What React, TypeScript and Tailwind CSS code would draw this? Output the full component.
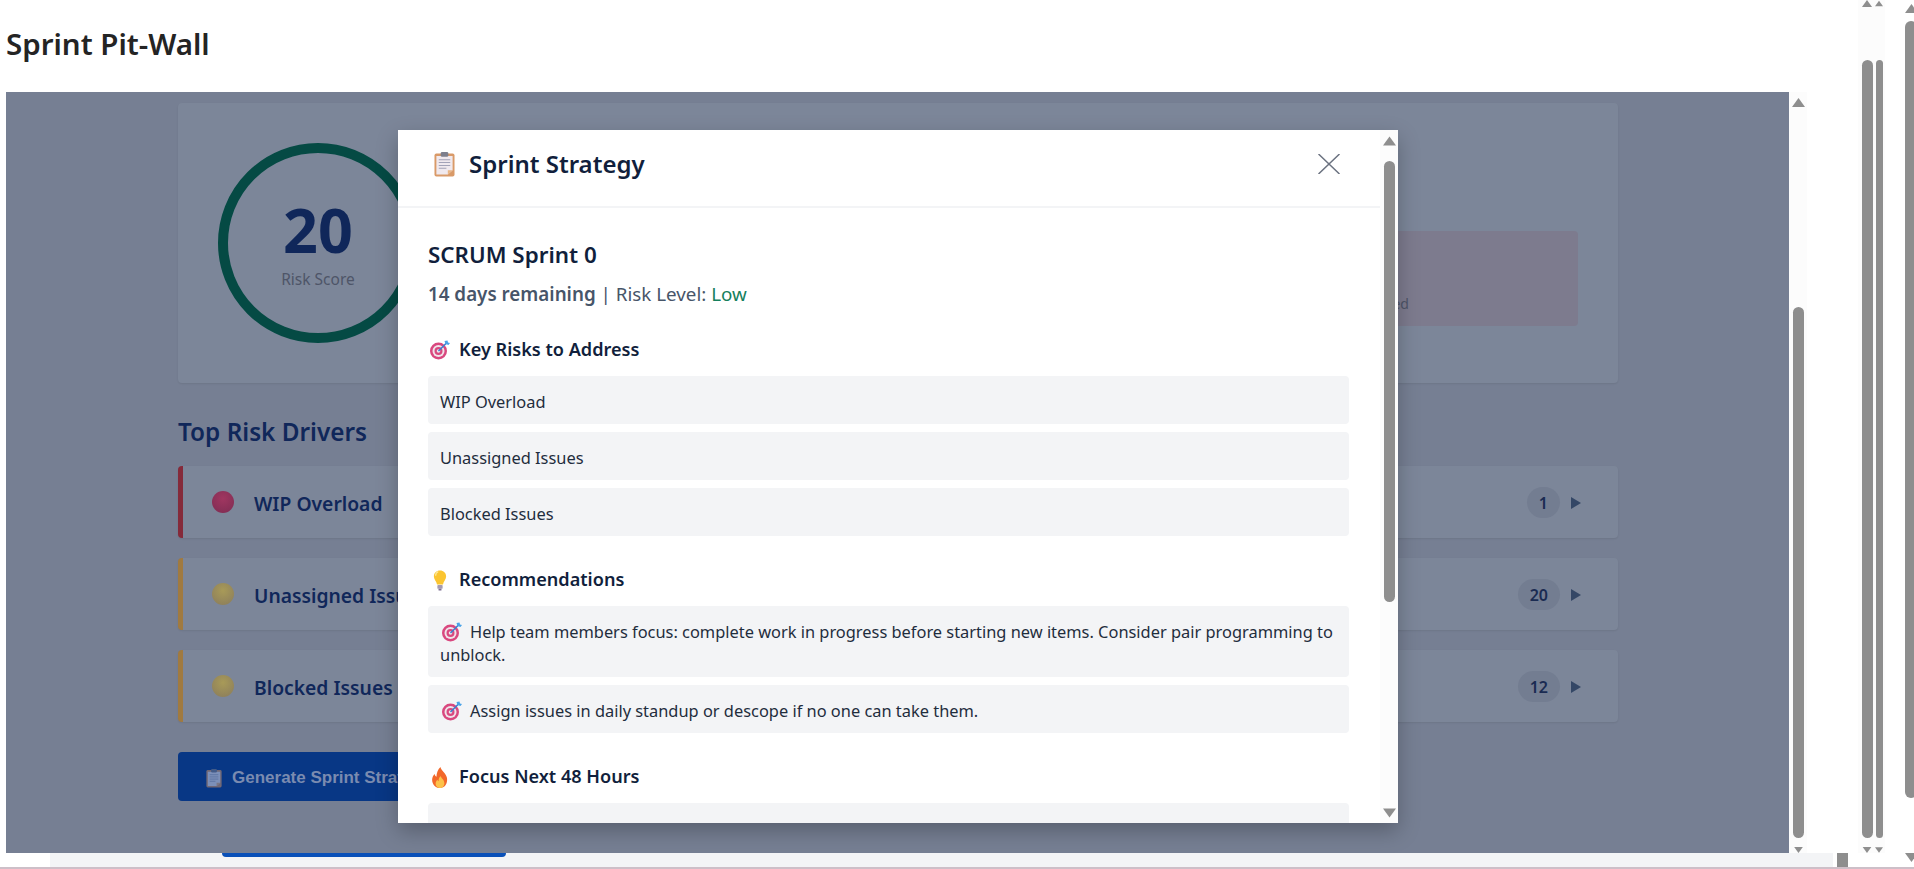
import React from "react";

const ClipboardIcon = ({ className }: { className?: string }) => (
  <svg viewBox="0 0 22 26" className={className}>
    <rect x="0.5" y="2" width="21" height="24" rx="2" fill="#d99a68" />
    <path d="M2.5 4.5h17v15l-5 4.5h-12z" fill="#f0e9ee" />
    <path d="M14.5 24l5-4.5h-5z" fill="#e9b585" />
    <rect x="7" y="0.5" width="8" height="5" rx="1.5" fill="#7d7f8c" />
    <path d="M5 8.5h12M5 11.5h12M5 14.5h12M5 17.5h8" stroke="#a3a3b8" strokeWidth="1.1" />
  </svg>
);

const TargetIcon = ({ className }: { className?: string }) => (
  <svg viewBox="0 0 20 20" className={className}>
    <circle cx="8.5" cy="11" r="8.5" fill="#d9487f" />
    <circle cx="8.5" cy="11" r="6" fill="#f0e4ea" />
    <circle cx="8.5" cy="11" r="4" fill="#d9487f" />
    <circle cx="8.5" cy="11" r="1.8" fill="#f0e4ea" />
    <path d="M8.5 11L17 2.5" stroke="#3b7fd0" strokeWidth="1.6" />
    <path d="M14.5 1l1 3 3 1 1.5-2-2-.5-.5-2z" fill="#4aa3e8" />
  </svg>
);

const BulbIcon = ({ className }: { className?: string }) => (
  <svg viewBox="0 0 16 24" className={className}>
    <path d="M8 0.5c4 0 7 3 7 6.8 0 3.4-3 5.4-3.6 9.2H4.6C4 12.700 1 10.700 1 7.300 1 3.500 4 .5 8 .5z" fill="#fbc531" />
    <path d="M6 1.800c-2 .7-3 2.600-3 4.700" stroke="#fde99a" strokeWidth="1.400" fill="none" />
    <rect x="5" y="17" width="6" height="4.500" rx="1" fill="#a59bb0" />
    <rect x="6.200" y="21.500" width="3.600" height="2" rx="1" fill="#7d6f92" />
  </svg>
);

const FireIcon = ({ className }: { className?: string }) => (
  <svg viewBox="0 0 18 24" className={className}>
    <path d="M9.500 0c.6 4 6.500 7 7.500 12.500C18 19 14 24 9 24S0 20 0 14.500c0-3 1.500-5 3-6.500.2 1.500.8 2.500 2 3C5 7 6.500 3 9.500 0z" fill="#f2682a" />
    <path d="M9.500 10c.5 2.500 4.500 4.500 4.500 8.500 0 3-2.200 5.500-5 5.500s-5-2.300-5-5c0-2 1-3.500 2-4.500.3 1 .8 1.500 1.500 1.700-.3-2.200.5-4.500 2-5.700z" fill="#fcc24a" />
  </svg>
);

// grey arrow-and-thumb scrollbar, the spacing classes are per bar
const Arrow = ({ down, className }: { down?: boolean; className?: string }) => (
  <svg viewBox="0 0 13 9" className={className}>
    <path d={down ? "M0 0h13L6.500 9z" : "M6.500 0L13 9H0z"} fill="#8e8e8e" />
  </svg>
);

const Thumb = ({ className }: { className?: string }) => (
  <div className={`rounded-full bg-[#8e8e8e] ${className}`} />
);

const drivers = [
  { name: "WIP Overload", count: "1", bar: "border-l-[#852a3a]", dot: "bg-[radial-gradient(circle_at_50%_35%,#a03660,#7d2c52)]" },
  { name: "Unassigned Issues", count: "20", bar: "border-l-[#a07a40]", dot: "bg-[radial-gradient(circle_at_50%_35%,#a89a58,#897b5c)]" },
  { name: "Blocked Issues", count: "12", bar: "border-l-[#a07a40]", dot: "bg-[radial-gradient(circle_at_50%_35%,#a89a58,#897b5c)]" },
];

const Item = ({ children }: { children: React.ReactNode }) => (
  <div className="rounded bg-[#f3f4f6] px-3 pb-[11px] pt-[14px] text-[16.4px] leading-[23px] text-[#1f2d3d]">{children}</div>
);

const SectionTitle = ({ icon, children, className }: { icon: React.ReactNode; children: React.ReactNode; className?: string }) => (
  <div className={`flex h-6 items-center text-[18.1px] font-semibold text-[#111f3c] ${className}`}>
    <span className="flex w-[31px] justify-center pl-[2px] pr-[9px]">{icon}</span>
    {children}
  </div>
);

const StrategyModal = () => (
  <div className="absolute left-[392px] top-[38px] flex h-[693px] w-[1000px] overflow-hidden bg-white shadow-[0_8px_20px_rgba(0,0,0,0.25)]">
    <div className="w-[982px]">
      <div className="flex h-[78px] items-center justify-between border-b-2 border-[#f3f4f6] pb-[8px] pl-[36px] pr-[40px]">
        <div className="flex items-center text-[24px] font-semibold text-[#111f3c]">
          <ClipboardIcon className="mr-[14px] h-[26px] w-[21px]" />
          Sprint Strategy
        </div>
        <svg viewBox="0 0 22 20" className="h-5 w-[22px]">
          <path d="M0.500 0L21.500 20M21.500 0L0.500 20" stroke="#6b7280" strokeWidth="1.500" />
        </svg>
      </div>
      <div className="pl-[30px] pr-[31px] pt-[33px]">
        <div className="h-7 text-[22.4px] font-semibold leading-7 text-[#111f3c]">SCRUM Sprint 0</div>
        <div className="mt-[13px] text-[18.8px] leading-6 text-[#475569]">
          <span className="font-semibold">14 days remaining</span> | Risk Level: <span className="text-[#15805d]">Low</span>
        </div>
        <SectionTitle icon={<TargetIcon className="h-5 w-5 shrink-0" />} className="mt-[32px]">Key Risks to Address</SectionTitle>
        <div className="mt-[14px] flex flex-col gap-2">
          <Item>WIP Overload</Item>
          <Item>Unassigned Issues</Item>
          <Item>Blocked Issues</Item>
        </div>
        <SectionTitle icon={<BulbIcon className="h-[21px] w-[14px] shrink-0" />} className="mt-[32px]">Recommendations</SectionTitle>
        <div className="mt-[14px] flex flex-col gap-2">
          <Item>
            <TargetIcon className="ml-[2px] mr-[8px] inline-block h-5 w-5 align-[-4px]" />
            Help team members focus: complete work in progress before starting new items. Consider pair programming to unblock.
          </Item>
          <Item>
            <TargetIcon className="ml-[2px] mr-[8px] inline-block h-5 w-5 align-[-4px]" />
            Assign issues in daily standup or descope if no one can take them.
          </Item>
        </div>
        <SectionTitle icon={<FireIcon className="h-[21px] w-[16px] shrink-0" />} className="mt-[32px]">Focus Next 48 Hours</SectionTitle>
        <div className="mt-[14px] flex flex-col gap-2">
          <Item>
            <span className="mr-[18px] text-[#1d5fb0]">DEMO-5:</span>
            Fix critical authentication vulnerability
          </Item>
        </div>
      </div>
    </div>
    <div className="flex w-[18px] flex-col items-center bg-[#fcfcfc] pt-[6px]">
      <Arrow className="h-[10px] w-[13px]" />
      <Thumb className="mt-[15px] h-[441px] w-[11px]" />
      <Arrow down className="mt-[206px] h-[10px] w-[13px]" />
    </div>
  </div>
);

const BackgroundPage = () => (
  <div className="w-[1440px] pt-[11px]">
    <div className="flex h-[280px] items-start justify-between rounded bg-[#7c8699] pl-[40px] pr-[40px] pt-[40px] shadow-[0_1px_2px_rgba(0,0,0,0.08)]">
      <div className="flex h-[200px] w-[200px] flex-col items-center justify-center rounded-full border-[10px] border-[#054a44]">
        <div className="text-[61px] font-bold leading-[70px] text-[#10275a]">20</div>
        <div className="mt-[2px] text-[15.5px] leading-6 text-[#4e5568]">Risk Score</div>
      </div>
      <div className="mt-[88px] flex h-[95px] w-[300px] items-end rounded bg-[#7d7b8e] pb-[12px] pl-[79px] text-[14px] leading-5 text-[#4e5568]">Blocked</div>
    </div>
    <div className="mt-[33px] h-8 text-[24.3px] font-semibold leading-8 text-[#10275a]">Top Risk Drivers</div>
    <div className="mt-[18px] flex flex-col gap-5">
      {drivers.map((d) => (
        <div key={d.name} className={`flex h-[72px] items-center justify-between rounded border-l-[5px] bg-[#7c8699] pl-[29px] pr-[37px] shadow-[0_1px_2px_rgba(0,0,0,0.08)] ${d.bar}`}>
          <div className="flex items-center gap-5 text-[19.3px] font-semibold text-[#10275a]">
            <span className={`h-[22px] w-[22px] rounded-full ${d.dot}`} />
            <span className="pt-[5px]">{d.name}</span>
          </div>
          <div className="flex items-center gap-[11px] pt-[1px]">
            <span className="flex h-[31px] min-w-[32px] items-center justify-center rounded-full bg-[#737d91] px-3 text-[16px] font-semibold text-[#1a2b52]">{d.count}</span>
            <svg viewBox="0 0 10 12" className="h-3 w-[10px]"><path d="M0 0l10 6-10 6z" fill="#344766" /></svg>
          </div>
        </div>
      ))}
    </div>
    <div className="mt-[30px] flex h-[49px] w-[360px] items-center rounded bg-[#083785] pl-[28px] pt-[2px] font-['Liberation_Sans',Arial,sans-serif] text-[17px] font-bold text-[#7a8bb0]">
      <ClipboardIcon className="mr-[10px] h-[20px] w-[16px] opacity-50" />
      Generate Sprint Strategy
    </div>
  </div>
);

export default function App() {
  return (
    <div className="flex h-[869px] w-[1914px] flex-col overflow-hidden bg-white font-['Noto_Sans',sans-serif]">
      <div className="flex h-[853px]">
        <div className="w-[1789px] shrink-0">
          <div className="flex h-[92px] items-center pb-[3px] pl-[6px] text-[29.5px] font-semibold text-[#242424]">Sprint Pit-Wall</div>
          <div className="relative ml-[6px] h-[761px] overflow-hidden bg-[#767f93] pl-[172px]">
            <BackgroundPage />
            <StrategyModal />
          </div>
        </div>
        <div className="mt-[92px] flex w-[18px] shrink-0 flex-col items-center bg-[#fcfcfc] pt-[6px]">
          <Arrow className="h-[9px] w-[13px]" />
          <Thumb className="mt-[200px] h-[531px] w-[11px]" />
          <Arrow down className="mt-[9px] h-[6px] w-[13px]" />
        </div>
        <div className="ml-[51px] flex w-[27px] shrink-0 bg-[#fcfcfc] pl-[3px]">
          <div className="flex w-[12px] flex-col items-center">
            <Arrow className="h-[7px] w-[12px]" />
            <Thumb className="mt-[53px] h-[778px] w-[11px]" />
            <Arrow down className="mt-[9px] h-[6px] w-[12px]" />
          </div>
          <div className="ml-[2px] flex w-[8px] flex-col items-center">
            <Arrow className="h-[7px] w-[8px]" />
            <Thumb className="mt-[53px] h-[778px] w-[7px]" />
            <Arrow down className="mt-[9px] h-[6px] w-[8px]" />
          </div>
        </div>
        <div className="ml-[20px] flex w-[9px] shrink-0 flex-col items-start overflow-hidden pt-[4px]">
          <Arrow className="h-[9px] w-[13px] shrink-0" />
          <Thumb className="mt-[8px] h-[777px] w-[12px] shrink-0" />
        </div>
      </div>
      <div className="flex h-[14px]">
        <div className="w-[50px] shrink-0" />
        <div className="relative w-[1783px] shrink-0 bg-[#f3f4f6]">
          <div className="absolute left-[172px] top-0 h-1 w-[284px] rounded-b bg-[#0a50b8]" />
        </div>
        <div className="ml-[4px] w-[11px] shrink-0 bg-[#8e8e8e]" />
        <div className="ml-[57px] w-[9px] shrink-0 overflow-hidden">
          <Arrow down className="h-[9px] w-[13px] max-w-none" />
        </div>
      </div>
      <div className="h-[2px] bg-[#cdbfc8]" />
    </div>
  );
}
